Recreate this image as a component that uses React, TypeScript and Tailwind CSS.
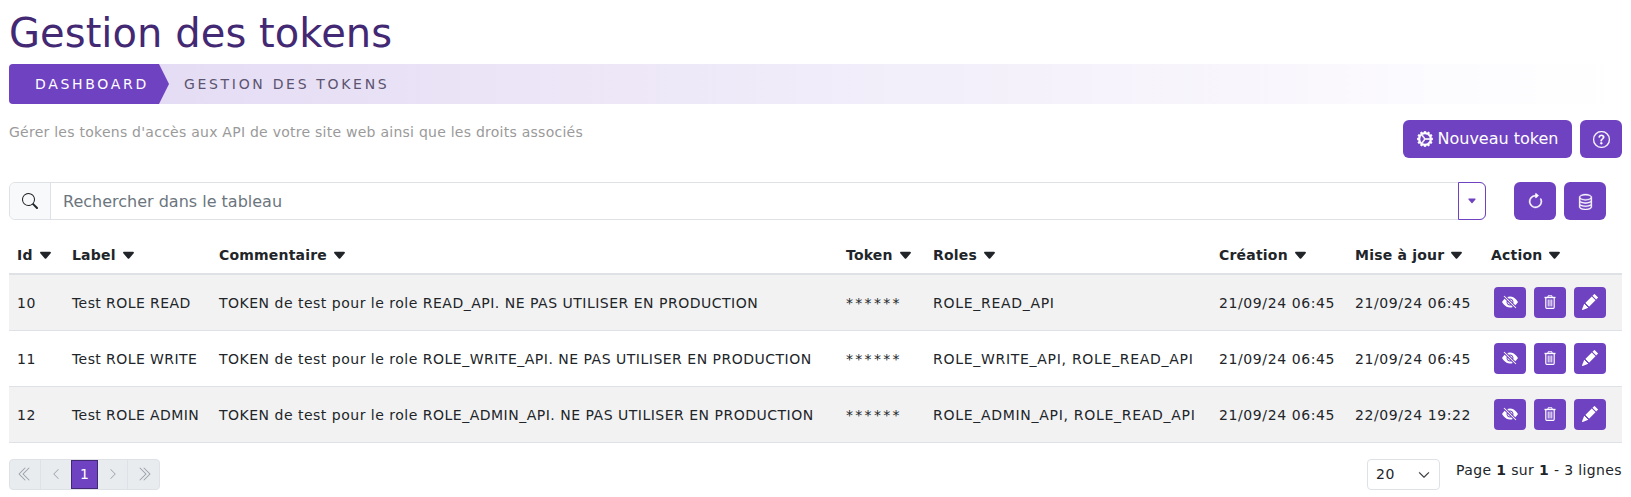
import { BsArrowClockwise, BsCaretDownFill, BsChevronDoubleLeft, BsChevronDoubleRight, BsChevronDown, BsChevronLeft, BsChevronRight, BsDatabase, BsEyeSlashFill, BsGearWideConnected, BsPencilFill, BsQuestionCircle, BsSearch } from "react-icons/bs";

const ROWS = [
  { id: 10, label: "Test ROLE READ", comment: "TOKEN de test pour le role READ_API. NE PAS UTILISER EN PRODUCTION", roles: "ROLE_READ_API", created: "21/09/24 06:45", updated: "21/09/24 06:45" },
  { id: 11, label: "Test ROLE WRITE", comment: "TOKEN de test pour le role ROLE_WRITE_API. NE PAS UTILISER EN PRODUCTION", roles: "ROLE_WRITE_API, ROLE_READ_API", created: "21/09/24 06:45", updated: "21/09/24 06:45" },
  { id: 12, label: "Test ROLE ADMIN", comment: "TOKEN de test pour le role ROLE_ADMIN_API. NE PAS UTILISER EN PRODUCTION", roles: "ROLE_ADMIN_API, ROLE_READ_API", created: "21/09/24 06:45", updated: "22/09/24 19:22" },
];

const COLUMNS = [
  { name: "Id", width: "w-[55px]" },
  { name: "Label", width: "w-[147px]" },
  { name: "Commentaire", width: "w-[627px]" },
  { name: "Token", width: "w-[87px]" },
  { name: "Roles", width: "w-[286px]" },
  { name: "Création", width: "w-[136px]" },
  { name: "Mise à jour", width: "w-[136px]" },
  { name: "Action", width: "w-[139px]" },
];

function TrashIcon() {
  return (
    <svg viewBox="0 0 12 14" className="h-[14px] w-[12px]" fill="none" stroke="currentColor">
      <path d="M0.5 2.5h11" strokeWidth="1.4" />
      <path d="M4 2V0.8h4V2" strokeWidth="1" />
      <path d="M1.8 3v9.2c0 .7.4 1.1 1 1.1h6.4c.6 0 1-.4 1-1.1V3" strokeWidth="1.2" />
      <path d="M4.2 4.5v7M6 4.5v7M7.8 4.5v7" strokeWidth="1" />
    </svg>
  );
}

export default function App() {
  return (
    <div className="h-[497px] overflow-hidden bg-white pl-[9px] pr-[9px] font-['DejaVu_Sans',sans-serif] text-[#212529]">
      <h1 className="pt-[9px] text-[40px] leading-[48px] tracking-[0.06px] text-[#432874]">Gestion des tokens</h1>

      <nav className="mt-[7px] flex h-[40px] items-center rounded-l-[4px] bg-gradient-to-r from-[#e2d9f3] to-white text-[14px] tracking-[2.68px]">
        <div className="flex h-full items-center">
          <span className="flex h-full w-[150px] items-center rounded-l-[4px] bg-[#6f42c1] pl-[26px] text-white">DASHBOARD</span>
          <span className="h-full w-[10px] bg-[#6f42c1] [clip-path:polygon(0_0,100%_50%,0_100%)]" />
        </div>
        <span className="ml-[15px] text-[#5c5470]">GESTION DES TOKENS</span>
      </nav>

      <div className="mt-[16px] flex justify-between">
        <p className="text-[14px] leading-[24px] tracking-[0.25px] text-[#9a9a9a]">Gérer les tokens d'accès aux API de votre site web ainsi que les droits associés</p>
        <div className="flex gap-[8px]">
          <button className="flex h-[38px] w-[169px] items-center justify-center gap-[5px] rounded-[6px] bg-[#6f42c1] text-[16px] text-white">
            <BsGearWideConnected className="size-[16px]" stroke="currentColor" strokeWidth="0.6" />
            Nouveau token
          </button>
          <button className="flex h-[38px] w-[42px] items-center justify-center rounded-[6px] bg-[#6f42c1] text-white">
            <BsQuestionCircle className="size-[17px]" stroke="currentColor" strokeWidth="0.3" />
          </button>
        </div>
      </div>

      <div className="mt-[24px] flex">
        <div className="flex h-[38px] w-[1477px] rounded-[6px] border border-[#dee2e6]">
          <span className="flex w-[41px] items-center justify-center rounded-l-[6px] border-r border-[#dee2e6] bg-[#f8f9fa]">
            <BsSearch className="size-[16px]" />
          </span>
          <span className="flex flex-1 items-center pl-[12px] pt-[1px] text-[16px] text-[#6c757d]">Rechercher dans le tableau</span>
          <span className="-m-px flex w-[28px] items-center justify-center rounded-r-[6px] border border-[#6f42c1] text-[#6f42c1]">
            <BsCaretDownFill className="size-[10px]" />
          </span>
        </div>
        <div className="ml-[28px] flex gap-[8px]">
          <button className="flex h-[38px] w-[42px] items-center justify-center rounded-[6px] bg-[#6f42c1] text-white">
            <BsArrowClockwise className="size-[17px]" stroke="currentColor" strokeWidth="0.5" />
          </button>
          <button className="flex h-[38px] w-[42px] items-center justify-center rounded-[6px] bg-[#6f42c1] text-white">
            <BsDatabase className="size-[17px]" stroke="currentColor" strokeWidth="0.3" />
          </button>
        </div>
      </div>

      <table className="mt-[8px] w-[1613px] table-fixed border-collapse text-[14px]">
        <thead>
          <tr className="h-[46px] border-b-2 border-[#dee2e6]">
            {COLUMNS.map((col) => (
              <th key={col.name} className={`${col.width} px-[8px] pb-[7px] pt-[17px] text-left align-bottom font-bold tracking-[0.2px]`}>
                <span className="inline-flex items-center gap-[5px]">
                  {col.name}
                  <BsCaretDownFill className="size-[15px]" />
                </span>
              </th>
            ))}
          </tr>
        </thead>
        <tbody>
          {ROWS.map((row, i) => (
            <tr key={row.id} className={`h-[56px] border-b border-[#dee2e6] ${i % 2 === 0 ? "bg-[#f2f2f2]" : "bg-white"}`}>
              <td className="px-[8px] pt-[2px] tracking-[0.5px]">{row.id}</td>
              <td className="whitespace-nowrap px-[8px] pt-[2px] tracking-[0.42px]">{row.label}</td>
              <td className="whitespace-nowrap px-[8px] pt-[2px] tracking-[0.5px]">{row.comment}</td>
              <td className="px-[8px] pt-[2px] tracking-[2.3px]">******</td>
              <td className="whitespace-nowrap px-[8px] pt-[2px] tracking-[0.71px]">{row.roles}</td>
              <td className="whitespace-nowrap px-[8px] pt-[2px] tracking-[0.6px]">{row.created}</td>
              <td className="whitespace-nowrap px-[8px] pt-[2px] tracking-[0.6px]">{row.updated}</td>
              <td className="px-[11px]">
                <div className="flex gap-[8px]">
                  <button className="flex h-[31px] w-[32px] items-center justify-center rounded-[4px] bg-[#6f42c1] text-white">
                    <BsEyeSlashFill className="size-[16px]" />
                  </button>
                  <button className="flex h-[31px] w-[32px] items-center justify-center rounded-[4px] bg-[#6f42c1] text-white">
                    <TrashIcon />
                  </button>
                  <button className="flex h-[31px] w-[32px] items-center justify-center rounded-[4px] bg-[#6f42c1] text-white">
                    <BsPencilFill className="size-[16px]" />
                  </button>
                </div>
              </td>
            </tr>
          ))}
        </tbody>
      </table>

      <div className="mt-[16px] flex items-start justify-between">
        <div className="flex h-[31px] overflow-hidden rounded-[4px] border border-[#dee2e6] bg-[#e9ecef] text-[#9aa1a9]">
          <span className="flex w-[31px] items-center justify-center border-r border-[#dee2e6]"><BsChevronDoubleLeft className="size-[16px]" /></span>
          <span className="flex w-[30px] items-center justify-center"><BsChevronLeft className="size-[12px]" /></span>
          <span className="flex w-[27px] items-center justify-center border border-[#432874] bg-[#6f42c1] text-[14px] text-white">1</span>
          <span className="flex w-[30px] items-center justify-center border-r border-[#dee2e6]"><BsChevronRight className="size-[12px]" /></span>
          <span className="flex w-[31px] items-center justify-center"><BsChevronDoubleRight className="size-[16px]" /></span>
        </div>
        <div className="flex items-start">
          <div className="flex h-[31px] w-[73px] items-center justify-between rounded-[4px] border border-[#dee2e6] pl-[8px] pr-[9px] pt-[1px] text-[14px] tracking-[0.5px]">
            20
            <BsChevronDown className="size-[12px]" stroke="currentColor" strokeWidth="0.6" />
          </div>
          <p className="ml-[16px] pt-[1px] text-[14px] leading-[21px] tracking-[0.37px]">Page <b>1</b> sur <b>1</b> - 3 lignes</p>
        </div>
      </div>
    </div>
  );
}
